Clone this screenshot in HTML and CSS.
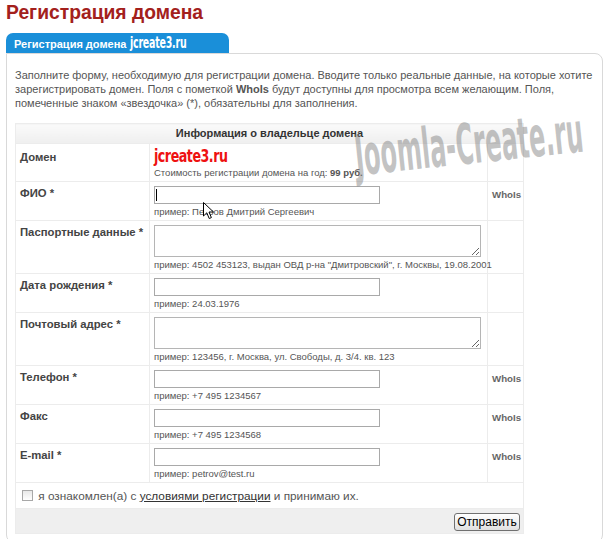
FILE: index.html
```html
<!DOCTYPE html>
<html lang="ru">
<head>
<meta charset="utf-8">
<title>Регистрация домена</title>
<link rel="stylesheet" href="styles.css">
</head>
<body>
<h1 class="title">Регистрация домена</h1>
<div class="tab">Регистрация домена <span class="tab-domain">jcreate3.ru</span></div>
<div class="panel">
  <p class="intro">Заполните форму, необходимую для регистрации домена. Вводите только реальные данные, на которые хотите зарегистрировать домен. Поля с пометкой <b>WhoIs</b> будут доступны для просмотра всем желающим. Поля, помеченные знаком «звездочка» (*), обязательны для заполнения.</p>
  <table class="form">
    <colgroup><col class="c1"><col class="c2"><col class="c3"></colgroup>
    <tr class="head"><th colspan="3">Информация о владельце домена</th></tr>
    <tr class="domain-row">
      <td class="lbl lbl-domain">Домен</td>
      <td class="fld"><div class="domain-name"><span class="domain-text">jcreate3.ru</span></div><div class="hint">Стоимость регистрации домена на год: <b>99 руб.</b></div></td>
      <td class="who"></td>
    </tr>
    <tr>
      <td class="lbl">ФИО *</td>
      <td class="fld"><div class="inwrap"><input class="inp" type="text"><span class="caret"></span></div><div class="hint">пример: Петров Дмитрий Сергеевич</div></td>
      <td class="who">WhoIs</td>
    </tr>
    <tr>
      <td class="lbl">Паспортные данные *</td>
      <td class="fld"><textarea class="area"></textarea><div class="hint">пример: 4502 453123, выдан ОВД р-на "Дмитровский", г. Москвы, 19.08.2001</div></td>
      <td class="who"></td>
    </tr>
    <tr>
      <td class="lbl">Дата рождения *</td>
      <td class="fld"><input class="inp" type="text"><div class="hint">пример: 24.03.1976</div></td>
      <td class="who"></td>
    </tr>
    <tr>
      <td class="lbl">Почтовый адрес *</td>
      <td class="fld"><textarea class="area"></textarea><div class="hint">пример: 123456, г. Москва, ул. Свободы, д. 3/4. кв. 123</div></td>
      <td class="who"></td>
    </tr>
    <tr>
      <td class="lbl">Телефон *</td>
      <td class="fld"><input class="inp" type="text"><div class="hint">пример: +7 495 1234567</div></td>
      <td class="who">WhoIs</td>
    </tr>
    <tr>
      <td class="lbl">Факс</td>
      <td class="fld"><input class="inp" type="text"><div class="hint">пример: +7 495 1234568</div></td>
      <td class="who">WhoIs</td>
    </tr>
    <tr>
      <td class="lbl">E-mail *</td>
      <td class="fld"><input class="inp" type="text"><div class="hint">пример: petrov@test.ru</div></td>
      <td class="who">WhoIs</td>
    </tr>
    <tr class="agree-row">
      <td colspan="3"><label class="agree"><input class="chk" type="checkbox"> я ознакомлен(а) с <a class="link" href="#">условиями регистрации</a> и принимаю их.</label></td>
    </tr>
    <tr class="foot">
      <td colspan="3"><button class="btn" type="button">Отправить</button></td>
    </tr>
  </table>
</div>
<div class="watermark">Joomla-Create.ru</div>
<svg class="pointer" width="12" height="18" viewBox="0 0 12 18"><path d="M0.5 0.5 L0.5 14 L3.8 10.8 L6.2 16.5 L8.4 15.6 L6 10 L10.5 10 Z" fill="#fff" stroke="#000" stroke-width="1"/></svg>
</body>
</html>
```
FILE: styles.css
```css
* { box-sizing: border-box; }
html, body { margin: 0; }
body {
  padding: 0 6px;
  width: 610px;
  height: 539px;
  overflow: hidden;
  position: relative;
  background: #fff;
  font-family: "Liberation Sans", Arial, sans-serif;
  color: #444;
}
.title {
  margin: 0;
  padding-top: 1px;
  font-size: 19.3px;
  line-height: 24px;
  font-weight: bold;
  color: #a3201c;
}
.tab {
  margin-top: 8px;
  width: 223px;
  height: 20px;
  background: #1a8fd9;
  border-radius: 7px 7px 0 0;
  color: #fff;
  font-weight: bold;
  font-size: 11px;
  line-height: 21px;
  padding-left: 8px;
  white-space: nowrap;
}
.tab-domain {
  display: inline-block;
  font-family: "DejaVu Sans Condensed", sans-serif;
  font-size: 15px;
  letter-spacing: -0.3px;
  transform-origin: 0 60%;
  transform: scale(0.7, 1.1);
}
.panel {
  width: 597px;
  height: 490px;
  border: 1px solid #d9d9d9;
  border-radius: 0 8px 8px 8px;
  padding: 14px 8px 4px 8px;
}
.intro {
  margin: 0;
  font-size: 11px;
  line-height: 14px;
  color: #555;
}
.form {
  margin-top: 13px;
  width: 508px;
  border-collapse: collapse;
  table-layout: fixed;
  border: 1px solid #e6e6e6;
}
.c1 { width: 134px; }
.c2 { width: 338px; }
.c3 { width: 36px; }
.form td, .form th {
  border: 1px solid #ececec;
  vertical-align: top;
}
.head th {
  height: 20px;
  padding: 0;
  font-size: 11px;
  line-height: 18px;
  font-weight: bold;
  color: #333;
  text-align: center;
  background: linear-gradient(#fafafa, #efefef);
}
.lbl {
  padding: 4px 4px;
  font-size: 11.3px;
  line-height: 14px;
  font-weight: bold;
  color: #444;
  white-space: nowrap;
}
.lbl-domain { padding-top: 6px; }
.fld {
  padding: 4px 4px 3px 4px;
}
.who {
  padding: 6px 2px 0 4px;
  font-size: 9.7px;
  line-height: 14px;
  font-weight: bold;
  color: #666;
}
.domain-name {
  height: 15px;
  line-height: 15px;
  margin-top: 1px;
  white-space: nowrap;
}
.domain-text {
  display: inline-block;
  font-family: "DejaVu Sans Condensed", sans-serif;
  font-weight: bold;
  font-size: 17px;
  line-height: 15px;
  color: #ee1111;
  letter-spacing: -0.6px;
  transform-origin: 0 50%;
  transform: scale(0.83, 1.05);
}
.hint {
  margin-top: 2px;
  font-size: 9.5px;
  line-height: 11px;
  color: #555;
  white-space: nowrap;
}
.domain-row .hint { margin-top: 3px; }
.inwrap { position: relative; width: 226px; height: 18px; }
.inp {
  display: block;
  width: 226px;
  height: 18px;
  margin: 0;
  border: 1px solid #a9a9a9;
  border-radius: 0;
  background: #fff;
  padding: 0 3px;
  font-size: 11px;
}
.caret {
  position: absolute;
  left: 2px;
  top: 3px;
  width: 1px;
  height: 12px;
  background: #000;
}
.area {
  display: block;
  width: 327px;
  height: 32px;
  margin: 0;
  border: 1px solid #b5b5b5;
  border-radius: 0;
  resize: both;
  background: #fff;
  font-size: 11px;
}
.agree-row td {
  height: 26px;
  padding: 0 6px;
  vertical-align: middle;
  font-size: 11.8px;
  color: #555;
}
.agree { display: block; line-height: 14px; }
.chk {
  appearance: none;
  -webkit-appearance: none;
  display: inline-block;
  vertical-align: -1px;
  width: 11px;
  height: 11px;
  margin: 0 2px 0 0;
  border: 1px solid #a8a8a8;
  background: linear-gradient(#e8e8e8, #fff);
}
.link { color: #333; text-decoration: underline; }
.foot td {
  height: 25px;
  padding: 3px 3px 0 0;
  text-align: right;
  background: #efefef;
}
.btn {
  width: 66px;
  height: 18px;
  padding: 0;
  border: 1px solid #707070;
  border-radius: 3px;
  background: linear-gradient(#ffffff, #e0e0e0);
  font-family: "Liberation Sans", Arial, sans-serif;
  font-size: 12px;
  color: #000;
  line-height: 16px;
}
.watermark {
  position: absolute;
  left: 352px;
  top: 128px;
  font-family: "DejaVu Sans", sans-serif;
  font-weight: bold;
  font-size: 40px;
  line-height: 40px;
  color: rgba(135, 135, 135, 0.5);
  white-space: nowrap;
  transform-origin: 0 0;
  transform: rotate(-6deg) scale(0.6, 1.4);
  pointer-events: none;
}
.pointer {
  position: absolute;
  left: 203px;
  top: 202px;
}
```
